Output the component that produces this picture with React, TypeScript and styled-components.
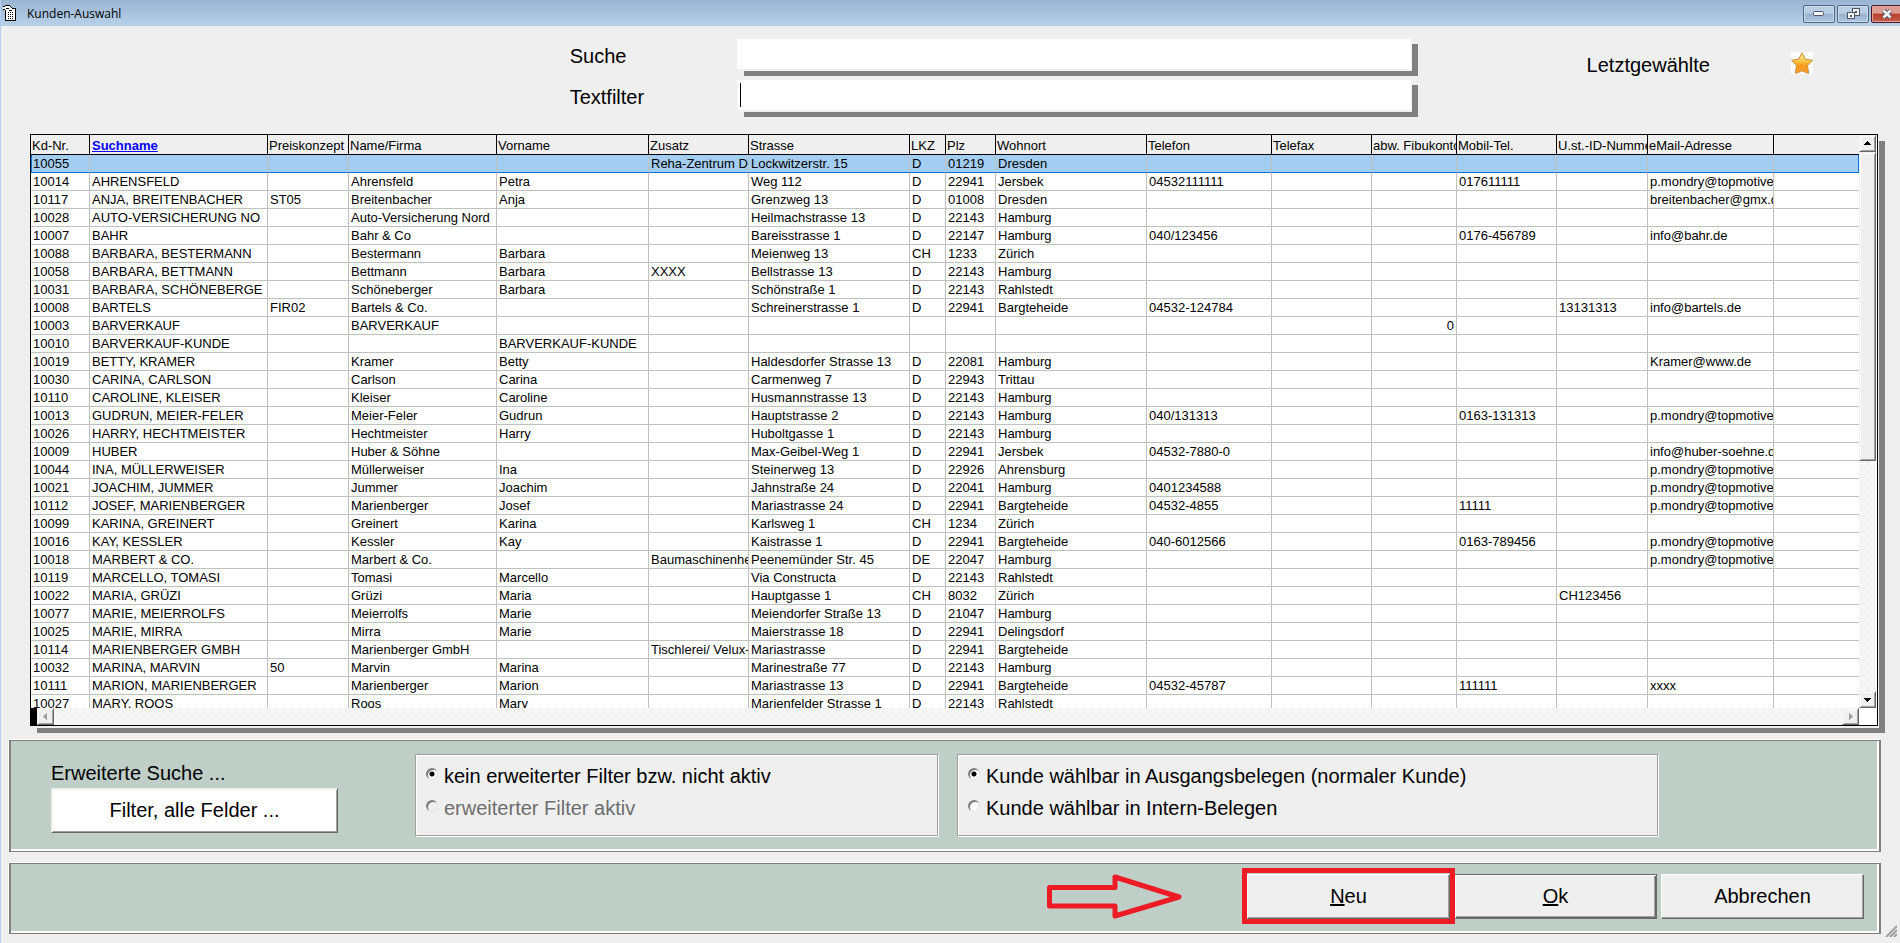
import React from 'react';
import styled, { createGlobalStyle, css } from 'styled-components';

const GlobalStyle = createGlobalStyle`
  *, *::before, *::after { box-sizing: border-box; }
  body {
    margin: 0;
    background: #efefef;
    color: #000;
    font-family: "Liberation Sans", Arial, sans-serif;
    font-size: 20px;
    line-height: 24px;
  }
  button, input { font: inherit; color: inherit; margin: 0; padding: 0; }
`;

const Window = styled.div`
  display: flex;
  flex-direction: column;
  height: 100vh;
  min-height: 640px;
  min-width: 1300px;
  position: relative;
  border-left: 1px solid #b4cfec;
`;

const TitleBar = styled.header`
  flex: none;
  display: flex;
  align-items: center;
  height: 26px;
  padding-left: 2px;
  overflow: hidden;
  background: linear-gradient(#9ab4d2, #b8d1ea);
`;

const Title = styled.h1`
  margin: 2px 0 0 10px;
  flex: 1;
  font: 12px/16px "Open Sans", "Noto Sans", sans-serif;
`;

const WindowButtons = styled.div`
  display: flex;
  gap: 2px;
  margin: 2px -3px 0 0;
`;

const WindowButton = styled.button<{ $close?: boolean }>`
  display: flex;
  align-items: center;
  justify-content: center;
  width: 32px;
  height: 18px;
  border: 1px solid ${p => (p.$close ? '#4d1620' : '#56657f')};
  border-radius: 2px;
  box-shadow: inset 0 0 0 1px ${p => (p.$close ? '#e2a49b' : '#c9dbee')};
  background: ${p =>
    p.$close
      ? 'linear-gradient(#dd9c92 0 45%, #b83d2c 50%, #c4604a)'
      : 'linear-gradient(#b9cde3 0 45%, #98b2cf 50%, #acc5df)'};
`;

const SearchArea = styled.form`
  flex: none;
  display: flex;
  padding: 13px 87px 22px 30%;
  margin-left: -1px;
`;

const SearchFields = styled.div`
  display: grid;
  grid-template-columns: 167px minmax(300px, 674px);
  row-gap: 9px;
  flex: 1;
`;

const FieldLabel = styled.label`
  padding-top: 5px;
`;

const SearchInput = styled.input<{ $active?: boolean }>`
  height: 32px;
  width: 100%;
  padding: 0 3px;
  border: 0;
  border-bottom: 2px solid #efefef;
  border-radius: 0;
  outline: none;
  background: #fff;
  box-shadow: 1px 0 #efefef, 7px 5px #808080;
  ${p => p.$active && css`
    &:placeholder-shown {
      caret-color: transparent;
      background: linear-gradient(#000, #000) 3px 3px / 1px 24px no-repeat #fff;
    }
  `}
`;

const Recent = styled.div`
  display: flex;
  align-items: center;
  gap: 81px;
  height: 48px;
`;

const RecentLabel = styled.span`
  padding-top: 4px;
`;

const StarButton = styled.button`
  display: flex;
  border: 0;
  background: #fff;
`;

const GridFrame = styled.section`
  flex: 1;
  min-height: 0;
  display: grid;
  grid-template-columns: minmax(0, 1fr) 17px;
  grid-template-rows: minmax(0, 1fr) 17px;
  margin: 0 22px 0 29px;
  border: 1px solid #000;
  padding-right: 1px;
  background: #fff;
  box-shadow: 1px 2px #efefef, 7px 7px #808080;
`;

const Viewport = styled.div`
  overflow: hidden;
`;

const Table = styled.table`
  width: 100%;
  table-layout: fixed;
  border-collapse: separate;
  border-spacing: 0;
  font-size: 13px;
  line-height: 17px;
  text-align: left;
`;

const HeadCell = styled.th<{ $sorted?: boolean }>`
  height: 20px;
  padding: 2px 0 0 1px;
  overflow: hidden;
  white-space: nowrap;
  font-weight: 400;
  background: #efefef;
  border-right: 1px solid #000;
  border-bottom: 1px solid #000;
  &:last-child { border-right: 0; }
  ${p => p.$sorted && css`
    padding-left: 2px;
    a { color: #0000ff; font-weight: 700; }
  `}
`;

const Cell = styled.td<{ $right?: boolean }>`
  height: 18px;
  padding: 0 0 0 2px;
  overflow: hidden;
  white-space: nowrap;
  border-right: 1px solid #c0c0c0;
  border-bottom: 1px solid #c0c0c0;
  &:last-child { border-right: 0; }
  ${p => p.$right && css`
    padding-right: 2px;
    text-align: right;
  `}
`;

const Row = styled.tr<{ $selected?: boolean }>`
  ${p => p.$selected && css`
    ${Cell} {
      background: #a3cef1;
      border-bottom-color: #0078d7;
    }
    ${Cell}:first-child { box-shadow: inset 1px 0 #0078d7; }
    ${Cell}:last-child { border-right: 1px solid #0078d7; }
  `}
`;

const hatch = css`
  background: repeating-conic-gradient(#efefef 0 25%, #fff 0 50%) 0 0 / 2px 2px;
`;

const raised = css`
  border: 1px solid;
  border-color: #efefef #696969 #696969 #efefef;
  box-shadow: inset 1px 1px #fff, inset -1px -1px #a0a0a0;
  background: #efefef;
`;

const VerticalBar = styled.div`
  display: flex;
  flex-direction: column;
  ${hatch}
`;

const Thumb = styled.div`
  height: 54%;
  ${raised}
`;

const Track = styled.div`
  flex: 1;
`;

const HorizontalBar = styled.div`
  display: flex;
  border-left: 6px solid #000;
  ${hatch}
`;

const ArrowButton = styled.button`
  flex: none;
  display: flex;
  align-items: center;
  justify-content: center;
  width: 17px;
  height: 17px;
  ${raised}
`;

const panel = css`
  flex: none;
  display: flex;
  margin: 0 19px 0 8px;
  border: solid #808080;
  border-width: 1px 2px;
  background: #bfcfc8;
  box-shadow: -1px -1px #fff, inset -2px -2px #fff;
`;

const FilterPanel = styled.section`
  ${panel}
  margin-top: 14px;
  height: 112px;
  padding: 13px 2px 0 40px;
`;

const Extended = styled.div`
  width: 287px;
  margin-right: 77px;
  padding-top: 7px;
`;

const ExtendedTitle = styled.h2`
  margin: 0 0 3px;
  font-size: 20px;
  line-height: 24px;
  font-weight: 400;
`;

const PushButton = styled.button<{ $white?: boolean; $default?: boolean; $wide?: boolean }>`
  width: ${p => (p.$wide ? '100%' : '203px')};
  height: 45px;
  padding-bottom: 2px;
  border: 1px solid;
  border-color: #fff #696969 #696969 #fff;
  border-radius: 0;
  box-shadow: inset -1px -1px #a0a0a0;
  background: ${p => (p.$white ? '#fff' : '#efefef')};
  ${p => p.$white && css`
    border-color: #efefef #696969 #696969 #efefef;
    box-shadow: inset 1px 1px #efefef, inset -1px -1px #a0a0a0;
  `}
  ${p => p.$default && css`
    border-color: #696969;
    box-shadow: inset 1px 1px #fff, inset -1px -1px #696969, inset -2px -2px #a0a0a0;
  `}
`;

const Group = styled.fieldset<{ $width: number }>`
  display: flex;
  flex-direction: column;
  gap: 8px;
  width: ${p => p.$width}px;
  height: 82px;
  margin: 0 19px 0 0;
  padding: 9px 9px 0 10px;
  border: 1px solid #a0a0a0;
  box-shadow: 1px 1px #fff, inset 1px 1px #fff;
  background: #efefef;
`;

const Option = styled.label<{ $disabled?: boolean }>`
  display: flex;
  align-items: center;
  gap: 6px;
  white-space: nowrap;
  color: ${p => (p.$disabled ? '#6d6d6d' : '#000')};
`;

const Radio = styled.input`
  appearance: none;
  flex: none;
  width: 12px;
  height: 12px;
  margin: 0 0 4px;
  border-radius: 50%;
  border: 1px solid;
  border-color: #808080 #e3e3e3 #e3e3e3 #808080;
  box-shadow: inset 1px 1px #696969;
  background: #fff;
  &:checked { background: radial-gradient(circle, #000 0 2px, #fff 3px); }
  &:disabled { background: #efefef; }
`;

const ActionPanel = styled.footer`
  ${panel}
  align-items: center;
  justify-content: flex-end;
  gap: 4px;
  margin-top: 11px;
  margin-bottom: 9px;
  height: 71px;
  padding: 0 15px 4px 0;
`;

const PointerArrow = styled.svg`
  flex: none;
  margin-right: 60px;
`;

const Highlighted = styled.div`
  position: relative;
  display: flex;
  &::after {
    content: "";
    position: absolute;
    inset: -6px -5px -5px;
    border: 5px solid #ed1c24;
    pointer-events: none;
  }
`;

const Grip = styled.svg`
  position: absolute;
  right: 3px;
  bottom: 6px;
`;

const columns = [
  ['Kd-Nr.', 59], ['Suchname', 178], ['Preiskonzept', 81], ['Name/Firma', 148], ['Vorname', 152],
  ['Zusatz', 100], ['Strasse', 161], ['LKZ', 36], ['Plz', 50], ['Wohnort', 151], ['Telefon', 125],
  ['Telefax', 100], ['abw. Fibukonto', 85], ['Mobil-Tel.', 100], ['U.st.-ID-Nummer', 91],
  ['eMail-Adresse', 126],
] as const;

const MAIL = 'p.mondry@topmotive';

/* number | search name | price | name | first name | extra | street | country | zip | town | phone | fax | account | mobile | tax id | mail */
const customers = `10055|||||Reha-Zentrum De|Lockwitzerstr. 15|D|01219|Dresden
10014|AHRENSFELD||Ahrensfeld|Petra||Weg 112|D|22941|Jersbek|04532111111|||017611111||${MAIL}
10117|ANJA, BREITENBACHER|ST05|Breitenbacher|Anja||Grenzweg 13|D|01008|Dresden||||||breitenbacher@gmx.de
10028|AUTO-VERSICHERUNG NO||Auto-Versicherung Nord|||Heilmachstrasse 13|D|22143|Hamburg
10007|BAHR||Bahr & Co|||Bareisstrasse 1|D|22147|Hamburg|040/123456|||0176-456789||info@bahr.de
10088|BARBARA, BESTERMANN||Bestermann|Barbara||Meienweg 13|CH|1233|Zürich
10058|BARBARA, BETTMANN||Bettmann|Barbara|XXXX|Bellstrasse 13|D|22143|Hamburg
10031|BARBARA, SCHÖNEBERGE||Schöneberger|Barbara||Schönstraße 1|D|22143|Rahlstedt
10008|BARTELS|FIR02|Bartels & Co.|||Schreinerstrasse 1|D|22941|Bargteheide|04532-124784||||13131313|info@bartels.de
10003|BARVERKAUF||BARVERKAUF|||||||||0
10010|BARVERKAUF-KUNDE|||BARVERKAUF-KUNDE
10019|BETTY, KRAMER||Kramer|Betty||Haldesdorfer Strasse 13|D|22081|Hamburg||||||Kramer@www.de
10030|CARINA, CARLSON||Carlson|Carina||Carmenweg 7|D|22943|Trittau
10110|CAROLINE, KLEISER||Kleiser|Caroline||Husmannstrasse 13|D|22143|Hamburg
10013|GUDRUN, MEIER-FELER||Meier-Feler|Gudrun||Hauptstrasse 2|D|22143|Hamburg|040/131313|||0163-131313||${MAIL}
10026|HARRY, HECHTMEISTER||Hechtmeister|Harry||Huboltgasse 1|D|22143|Hamburg
10009|HUBER||Huber & Söhne|||Max-Geibel-Weg 1|D|22941|Jersbek|04532-7880-0|||||info@huber-soehne.de
10044|INA, MÜLLERWEISER||Müllerweiser|Ina||Steinerweg 13|D|22926|Ahrensburg||||||${MAIL}
10021|JOACHIM, JUMMER||Jummer|Joachim||Jahnstraße 24|D|22041|Hamburg|0401234588|||||${MAIL}
10112|JOSEF, MARIENBERGER||Marienberger|Josef||Mariastrasse 24|D|22941|Bargteheide|04532-4855|||11111||${MAIL}
10099|KARINA, GREINERT||Greinert|Karina||Karlsweg 1|CH|1234|Zürich
10016|KAY, KESSLER||Kessler|Kay||Kaistrasse 1|D|22941|Bargteheide|040-6012566|||0163-789456||${MAIL}
10018|MARBERT & CO.||Marbert & Co.||Baumaschinenhe|Peenemünder Str. 45|DE|22047|Hamburg||||||${MAIL}
10119|MARCELLO, TOMASI||Tomasi|Marcello||Via Constructa|D|22143|Rahlstedt
10022|MARIA, GRÜZI||Grüzi|Maria||Hauptgasse 1|CH|8032|Zürich|||||CH123456
10077|MARIE, MEIERROLFS||Meierrolfs|Marie||Meiendorfer Straße 13|D|21047|Hamburg
10025|MARIE, MIRRA||Mirra|Marie||Maierstrasse 18|D|22941|Delingsdorf
10114|MARIENBERGER GMBH||Marienberger GmbH||Tischlerei/ Velux-|Mariastrasse|D|22941|Bargteheide
10032|MARINA, MARVIN|50|Marvin|Marina||Marinestraße 77|D|22143|Hamburg
10111|MARION, MARIENBERGER||Marienberger|Marion||Mariastrasse 13|D|22941|Bargteheide|04532-45787|||111111||xxxx
10027|MARY, ROOS||Roos|Mary||Marienfelder Strasse 1|D|22143|Rahlstedt`
  .split('\n')
  .map(line => line.split('|'));

const AppIcon = () => (
  <svg width="14" height="17" viewBox="0 0 14 17" shapeRendering="crispEdges" aria-hidden="true">
    <path d="M2.500 3.500h10v12h-10z" fill="#fff" stroke="#000" />
    <path d="M5 7.500h6M5 9.500h6M5 11.500h6M5 13.500h6" stroke="#000" strokeDasharray="1 1" />
    <path d="M0 2h2V1h5v1h1v1h1v2H7V4H5v1H2V4H0z" fill="#fff" />
    <path d="M0 1.500h2M2 .5h5M7 1.500h1M8 2.500h1M0 4.500h2M3 3.500h3M6 5.500h3" stroke="#000" />
  </svg>
);

const Star = () => (
  <svg width="22" height="22" viewBox="0 0 22 22" aria-hidden="true">
    <defs>
      <linearGradient id="gold" x1="0" y1="0" x2="0" y2="1">
        <stop offset="0" stopColor="#fff0a8" />
        <stop offset=".45" stopColor="#fdc03f" />
        <stop offset=".6" stopColor="#f99d1c" />
        <stop offset="1" stopColor="#fb9a2b" />
      </linearGradient>
    </defs>
    <path
      d="M11 .7l3.300 6.500 7.200 1.100-5.100 5.200 1.300 7.700c-2.200-.2-4.500-1.300-6.700-2.500-2.200 1.200-4.500 2.300-6.700 2.500l1.300-7.700L.5 8.300l7.200-1.100z"
      fill="url(#gold)" stroke="#c98f35" strokeLinejoin="round"
    />
  </svg>
);

const Triangle = ({ d, dim }: { d: string; dim?: boolean }) => (
  <svg width="9" height="9" viewBox="0 0 9 9" shapeRendering="crispEdges" aria-hidden="true">
    <path d={d} fill={dim ? '#a0a0a0' : '#000'} />
  </svg>
);

export default function App() {
  return (
    <Window>
      <GlobalStyle />
      <TitleBar>
        <AppIcon />
        <Title>Kunden-Auswahl</Title>
        <WindowButtons>
          <WindowButton type="button" aria-label="Minimieren">
            <svg width="12" height="6" viewBox="0 0 12 6"><rect x=".5" y=".5" width="10" height="4" rx="1" fill="#f4f4f4" stroke="#4d5668" /></svg>
          </WindowButton>
          <WindowButton type="button" aria-label="Wiederherstellen">
            <svg width="13" height="12" viewBox="0 0 13 12" fill="none" shapeRendering="crispEdges">
              <path d="M5.500.5h7v7h-7z" fill="#f4f4f4" stroke="#4d5668" />
              <path d="M8.500 3.500h1v1h-1z" stroke="#4d5668" />
              <path d="M.5 4.500h7v6h-7z" fill="#f4f4f4" stroke="#4d5668" />
              <path d="M3.500 7.500h1v1h-1z" stroke="#4d5668" />
            </svg>
          </WindowButton>
          <WindowButton type="button" $close aria-label="Schließen">
            <svg width="12" height="10" viewBox="0 0 12 10">
              <path d="M2.500 1.500l7 7M9.500 1.500l-7 7" stroke="#4d5668" strokeWidth="4.500" />
              <path d="M2.500 1.500l7 7M9.500 1.500l-7 7" stroke="#f4f4f4" strokeWidth="2.500" />
            </svg>
          </WindowButton>
        </WindowButtons>
      </TitleBar>

      <SearchArea>
        <SearchFields>
          <FieldLabel htmlFor="suche">Suche</FieldLabel>
          <SearchInput id="suche" />
          <FieldLabel htmlFor="textfilter">Textfilter</FieldLabel>
          <SearchInput id="textfilter" placeholder=" " $active autoFocus />
        </SearchFields>
        <Recent>
          <RecentLabel>Letztgewählte</RecentLabel>
          <StarButton type="button" aria-label="Letztgewählte anzeigen"><Star /></StarButton>
        </Recent>
      </SearchArea>

      <GridFrame>
        <Viewport>
          <Table>
            <colgroup>
              {columns.map(([name, width]) => <col key={name} width={width} />)}
              <col />
            </colgroup>
            <thead>
              <tr>
                {columns.map(([name]) =>
                  name === 'Suchname'
                    ? <HeadCell key={name} $sorted><a href="#suchname">{name}</a></HeadCell>
                    : <HeadCell key={name}>{name}</HeadCell>
                )}
                <HeadCell />
              </tr>
            </thead>
            <tbody>
              {customers.map((customer, i) => (
                <Row key={customer[0]} $selected={i === 0}>
                  {columns.map(([name], c) => (
                    <Cell key={name} $right={name === 'abw. Fibukonto'}>{customer[c]}</Cell>
                  ))}
                  <Cell />
                </Row>
              ))}
            </tbody>
          </Table>
        </Viewport>
        <VerticalBar>
          <ArrowButton type="button" aria-label="Nach oben"><Triangle d="M4 2h1v1h1v1h1v1h1v1H1V5h1V4h1V3h1z" /></ArrowButton>
          <Thumb />
          <Track />
          <ArrowButton type="button" aria-label="Nach unten"><Triangle d="M1 3h7v1H7v1H6v1H5v1H4V6H3V5H2V4H1z" /></ArrowButton>
        </VerticalBar>
        <HorizontalBar>
          <ArrowButton type="button" aria-label="Nach links"><Triangle dim d="M6 1v7H5V7H4V6H3V5H2V4h1V3h1V2h1V1z" /></ArrowButton>
          <Track />
          <ArrowButton type="button" aria-label="Nach rechts"><Triangle dim d="M3 1v7h1V7h1V6h1V5h1V4H6V3H5V2H4V1z" /></ArrowButton>
        </HorizontalBar>
      </GridFrame>

      <FilterPanel>
        <Extended>
          <ExtendedTitle>Erweiterte Suche ...</ExtendedTitle>
          <PushButton type="button" $white $wide>Filter, alle Felder ...</PushButton>
        </Extended>
        <Group $width={523} aria-label="Erweiterter Filter">
          <Option><Radio type="radio" name="filter" defaultChecked />kein erweiterter Filter bzw. nicht aktiv</Option>
          <Option $disabled><Radio type="radio" name="filter" disabled />erweiterter Filter aktiv</Option>
        </Group>
        <Group $width={701} aria-label="Kundenart">
          <Option><Radio type="radio" name="art" defaultChecked />Kunde wählbar in Ausgangsbelegen (normaler Kunde)</Option>
          <Option><Radio type="radio" name="art" />Kunde wählbar in Intern-Belegen</Option>
        </Group>
      </FilterPanel>

      <ActionPanel>
        <PointerArrow width="136" height="45" viewBox="0 0 136 45" aria-hidden="true">
          <path d="M2.500 13.500H68V3l64 20-64 19V32H2.500z" fill="none" stroke="#ed1c24" strokeWidth="5" strokeLinejoin="round" />
        </PointerArrow>
        <Highlighted><PushButton type="button"><u>N</u>eu</PushButton></Highlighted>
        <PushButton type="button" $default><u>O</u>k</PushButton>
        <PushButton type="button">Abbrechen</PushButton>
      </ActionPanel>

      <Grip width="12" height="12" viewBox="0 0 12 12" aria-hidden="true">
        <path d="M1 12L12 1M5 12l7-7M9 12l3-3" stroke="#a0a0a0" strokeWidth="2" />
      </Grip>
    </Window>
  );
}
